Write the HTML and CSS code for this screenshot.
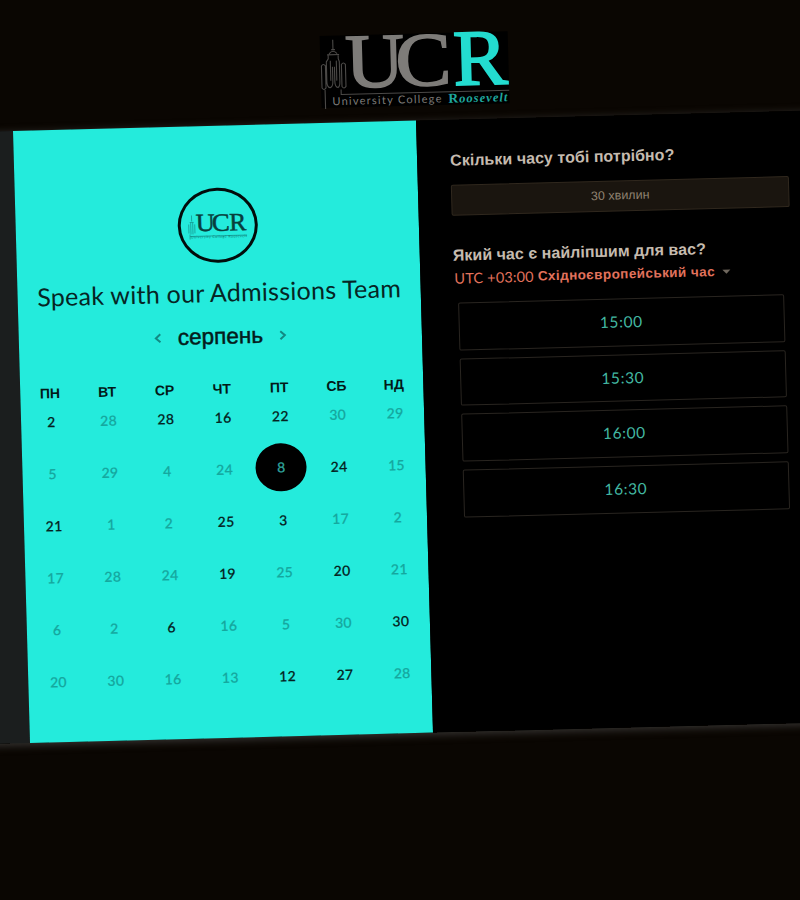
FILE: index.html
```
<!DOCTYPE html>
<html lang="uk">
<head>
<meta charset="utf-8">
<title>Speak with our Admissions Team</title>
<link rel="stylesheet" href="styles.css">
</head>
<body>
<div class="scene">
  <header class="header">
    <svg class="logo" viewBox="0 0 188 72">
      <rect width="188" height="72" fill="#000"/>
      <g fill="none" stroke="#4b4947" stroke-width="1.1">
        <path d="M13 4v10M11 14h4M9 18q4-5 8 0M7 19h12M8 19v4l-2 3v20q0 5 3 6 3-1 3-6V31M18 19v4l1 3v20q0 5-2 6-3-1-3-6V31M10 25v20M16 25v20M1 30q2-3 4 0v22q-2 3-4 0zM21 29q2-3 4 0v22q-2 3-4 0zM4 54v19M20 54v5h168"/>
      </g>
      <g class="logo-serif">
        <text x="25" y="52" font-size="77" textLength="59" lengthAdjust="spacingAndGlyphs" fill="#7e7c79" stroke="#7e7c79" stroke-width="1.6">U</text>
        <text x="75" y="52" font-size="76" textLength="56" lengthAdjust="spacingAndGlyphs" fill="#7e7c79" stroke="#7e7c79" stroke-width="1.6">C</text>
        <text x="133" y="52.500" font-size="79" textLength="54" lengthAdjust="spacingAndGlyphs" fill="#23dcd0" stroke="#23dcd0" stroke-width="2">R</text>
      </g>
      <text class="logo-sans" x="11" y="69.500" font-size="11" textLength="109" fill="#7e7c79">University College</text>
      <text class="logo-serif" x="127" y="70" font-size="13.5" font-weight="bold" fill="#1fa79e" textLength="59">R<tspan font-style="italic" font-size="12.5">oosevelt</tspan></text>
    </svg>
  </header>
  <main class="row">
    <div class="edge"></div>
    <section class="calendar">
      <div class="avatar">
        <svg class="mini-logo" viewBox="0 0 60 26">
          <path d="M4 2v6M2 9h4M1 11v9M3 9v12M5 9v12M7 11v9M2 21v5M2 23h57" fill="none" stroke="#15978f" stroke-width=".8"/>
          <g class="logo-serif" fill="#083f3d" stroke="#083f3d" stroke-width=".5" font-size="25">
            <text x="8" y="18" textLength="19" lengthAdjust="spacingAndGlyphs">U</text>
            <text x="24" y="18" textLength="18" lengthAdjust="spacingAndGlyphs">C</text>
            <text x="41.500" y="18" textLength="17" lengthAdjust="spacingAndGlyphs">R</text>
          </g>
          <text class="logo-sans" x="3" y="25" font-size="3.5" textLength="56" fill="#0c6b67">University College Roosevelt</text>
        </svg>
      </div>
      <h1 class="title">Speak with our Admissions Team</h1>
      <div class="month">
        <svg class="arrow" viewBox="0 0 8 12"><path d="M6.500 2 2 6l4.500 4"/></svg>
        <span class="month-name">серпень</span>
        <svg class="arrow" viewBox="0 0 8 12"><path d="M1.500 2 6 6l-4.500 4"/></svg>
      </div>
      <div class="grid weekdays">
        <span>ПН</span><span>ВТ</span><span>СР</span><span>ЧТ</span><span>ПТ</span><span>СБ</span><span>НД</span>
      </div>
      <div class="grid days">
        <span class="on">2</span><span>28</span><span class="on">28</span><span class="on">16</span><span class="on">22</span><span>30</span><span>29</span>
        <span>5</span><span>29</span><span>4</span><span>24</span><span class="selected">8</span><span class="on">24</span><span>15</span>
        <span class="on">21</span><span>1</span><span>2</span><span class="on">25</span><span class="on">3</span><span>17</span><span>2</span>
        <span>17</span><span>28</span><span>24</span><span class="on">19</span><span>25</span><span class="on">20</span><span>21</span>
        <span>6</span><span>2</span><span class="on">6</span><span>16</span><span>5</span><span>30</span><span class="on">30</span>
        <span>20</span><span>30</span><span>16</span><span>13</span><span class="on">12</span><span class="on">27</span><span>28</span>
      </div>
    </section>
    <section class="times">
      <h2 class="question">Скільки часу тобі потрібно?</h2>
      <div class="duration">30 хвилин</div>
      <h2 class="question second">Який час є найліпшим для вас?</h2>
      <div class="zone"><span class="utc">UTC +03:00</span><span class="zone-name">Східноєвропейський час</span><i class="caret"></i></div>
      <div class="slots">
        <div class="slot">15:00</div>
        <div class="slot">15:30</div>
        <div class="slot">16:00</div>
        <div class="slot">16:30</div>
      </div>
    </section>
  </main>
</div>
</body>
</html>
```
FILE: styles.css
```
* { box-sizing: border-box; }
html, body { margin: 0; height: 900px; overflow: hidden; background: #0a0602; }
.scene {
  width: 810px;
  height: 900px;
  transform-origin: 0 0;
  transform: matrix(1, -0.0258, 0.0278, 1, -3.64, 0.34);
  font-family: Lato, "Liberation Sans", sans-serif;
}
.header { height: 131px; padding: 44px 0 0 322px; }
.logo { display: block; width: 188px; height: 72px; overflow: visible; }
.logo-serif { font-family: "Liberation Serif", serif; }
.logo-sans { font-family: Lato, sans-serif; }

.row { display: flex; height: 612px; margin-left: -37px; width: 847px; box-shadow: 0 2px 9px #393735; }
.edge { width: 50px; flex: none; background: #1b1e1e; }
.calendar { width: 403px; flex: none; background: #24ebdc; display: flex; flex-direction: column; align-items: center; padding-top: 62px; }
.avatar { width: 80px; height: 75px; flex: none; border: 3px solid #020c0b; border-radius: 50%; display: flex; align-items: center; justify-content: center; }
.mini-logo { width: 60px; height: 26px; overflow: visible; }
.title { margin: 13px 0 0; height: 32px; line-height: 32px; font-size: 25px; font-weight: 400; color: #062524; white-space: nowrap; letter-spacing: 0.26px; }
.month { height: 30px; margin-top: 14px; display: flex; align-items: center; gap: 16px; }
.month-name { font: 400 22.5px/30px "Liberation Sans", sans-serif; color: #041c1b; -webkit-text-stroke: 0.5px #041c1b; }
.arrow { width: 8px; height: 12px; fill: none; stroke: #128a83; stroke-width: 2; }
.grid { display: grid; grid-template-columns: repeat(7, 57.3px); justify-items: center; align-items: center; flex: none; }
.weekdays { margin-top: 29px; height: 16px; font: bold 14px/16px "Liberation Sans", sans-serif; color: #021918; }
.days { grid-auto-rows: 51.9px; margin-top: -5px; padding-left: 1px; font-size: 14px; font-weight: 500; letter-spacing: 0.3px; color: #15a79e; -webkit-text-stroke: 0.2px currentColor; }
.days .on { color: #042120; }
.days .selected { width: 51px; height: 48px; line-height: 48px; margin: -1px 0 0 -1px; border-radius: 50%; background: #000; color: #2fa39c; text-align: center; }

.times { flex: 1; background: #000; padding: 30.5px 0 0 33px; }
.question { margin: 0; height: 20px; font: bold 16px/20px "Liberation Sans", sans-serif; color: #c5bbaf; white-space: nowrap; letter-spacing: 0.04px; }
.duration { width: 338px; height: 31px; margin-top: 14px; border: 1px solid #30281e; border-radius: 2px; background: #1a150f; color: #8f8271; font: 12.5px/29px "Liberation Sans", sans-serif; text-align: center; }
.second { margin-top: 30px; }
.zone { height: 20px; margin: 3px 0 0 1px; display: flex; align-items: center; gap: 4px; color: #e2725c; white-space: nowrap; }
.utc { font-size: 14.5px; letter-spacing: 0.15px; }
.zone-name { font: bold 13.5px/20px "Liberation Sans", sans-serif; letter-spacing: 0.42px; }
.caret { margin-left: 3px; border: 4px solid transparent; border-top-color: #6f675d; border-bottom: 0; }
.slots { margin: 14.5px 0 0 3.5px; width: 326px; display: grid; gap: 8px; }
.slot { height: 47.7px; border: 1px solid #292520; border-radius: 2px; color: #43b8a2; font-size: 15.5px; line-height: 45px; letter-spacing: 0.6px; text-align: center; }
```
